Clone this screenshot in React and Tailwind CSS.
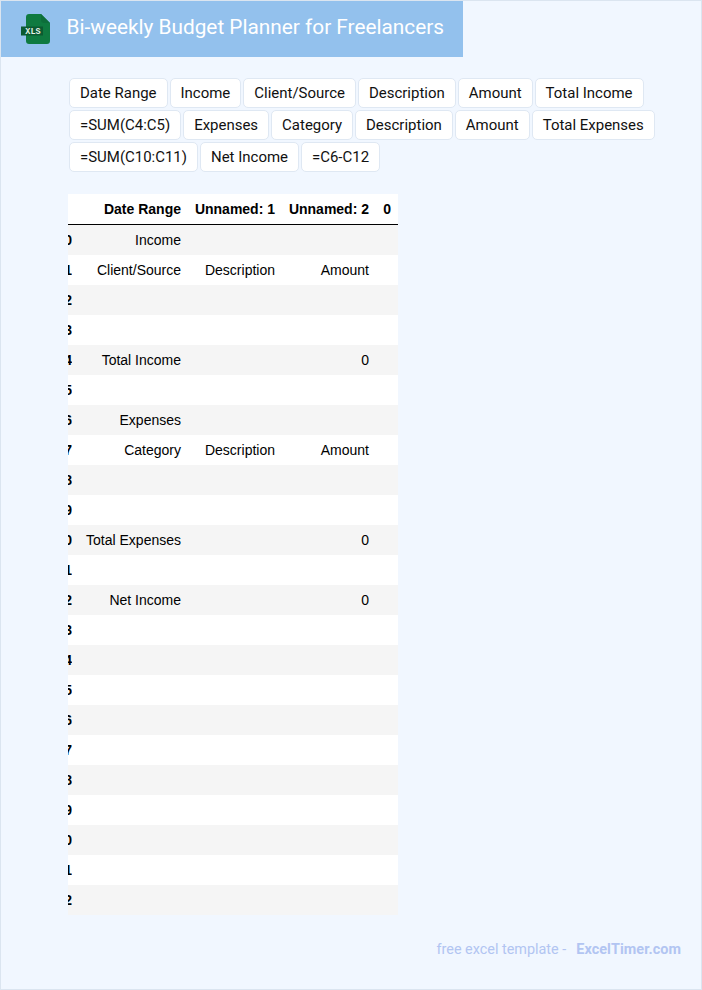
const chips = [
  'Date Range', 'Income', 'Client/Source', 'Description', 'Amount', 'Total Income',
  '=SUM(C4:C5)', 'Expenses', 'Category', 'Description', 'Amount', 'Total Expenses',
  '=SUM(C10:C11)', 'Net Income', '=C6-C12',
]

// idx, date range, unnamed 1, unnamed 2, 0
const rows = [
  ['0', 'Income'],
  ['1', 'Client/Source', 'Description', 'Amount'],
  ['2'],
  ['3'],
  ['4', 'Total Income', '', '0'],
  ['5'],
  ['6', 'Expenses'],
  ['7', 'Category', 'Description', 'Amount'],
  ['8'],
  ['9'],
  ['0', 'Total Expenses', '', '0'],
  ['1'],
  ['2', 'Net Income', '', '0'],
  ['3'], ['4'], ['5'], ['6'], ['7'], ['8'], ['9'], ['0'], ['1'], ['2'],
]

function XlsIcon() {
  return (
    <svg width="30" height="32" viewBox="0 0 30 32" className="shrink-0">
      <path d="M8 2H20L29 11V29C29 30.800 27.800 32 26 32H8C6.200 32 5 30.800 5 29V5C5 3.200 6.200 2 8 2Z" fill="#0f7a40" />
      <path d="M20 2L29 11H23C21.200 11 20 9.800 20 8Z" fill="#0d6e3a" />
      <rect x="0" y="14.500" width="22" height="9" fill="#0b5a31" />
      <text x="12" y="22" textAnchor="middle" fontSize="8.500" fontWeight="700" fill="#e6f2ea" style={{ fontFamily: '"Liberation Mono", monospace' }}>XLS</text>
    </svg>
  )
}

export default function App() {
  return (
    <div className="flex h-[990px] w-[702px] flex-col border border-[#dbe5f0] bg-[#f1f7ff] font-['Roboto',sans-serif]">
      <header className="flex h-[56px] w-[462px] items-center gap-[15.5px] bg-[#93c1ed] pb-[2px] pl-[20px]">
        <XlsIcon />
        <h1 className="text-[20.8px] font-normal text-white">Bi-weekly Budget Planner for Freelancers</h1>
      </header>

      <div className="flex flex-wrap gap-[2px] pl-[68px] pr-[30px] pt-[21px]">
        {chips.map((c, i) => (
          <span key={i} className="flex h-[30px] items-center rounded-[5px] border border-[#dfe8f3] bg-white px-[10px] text-[14.97px] text-[#111]">
            {c}
          </span>
        ))}
      </div>

      <div className="ml-[67px] mt-[22px] w-[330px] overflow-hidden bg-white font-['Liberation_Sans',Arial,sans-serif] text-[14px] text-black">
        <div className="flex h-[31px] items-center border-b border-black font-bold">
          <div className="w-[4px]" />
          <div className="w-[116px] pr-[7px] text-right">Date Range</div>
          <div className="w-[94px] pr-[7px] text-right">Unnamed: 1</div>
          <div className="w-[94px] pr-[7px] text-right">Unnamed: 2</div>
          <div className="w-[22px] pr-[7px] text-right">0</div>
        </div>
        {rows.map((r, i) => (
          <div key={i} className="flex h-[30px] items-center even:bg-[#f5f5f5]">
            <div className="flex w-[4px] justify-end overflow-hidden font-bold">
              <span>{r[0]}</span>
            </div>
            <div className="w-[116px] pr-[7px] text-right">{r[1]}</div>
            <div className="w-[94px] pr-[7px] text-right">{r[2]}</div>
            <div className="w-[94px] pr-[7px] text-right">{r[3]}</div>
            <div className="w-[22px]" />
          </div>
        ))}
      </div>

      <footer className="mt-[25px] flex justify-end gap-[10px] pr-[20px] text-[14.4px] leading-[20px] text-[#b2c5f2]">
        <span>free excel template -</span>
        <span className="font-bold tracking-[0.005em]">ExcelTimer.com</span>
      </footer>
    </div>
  )
}
